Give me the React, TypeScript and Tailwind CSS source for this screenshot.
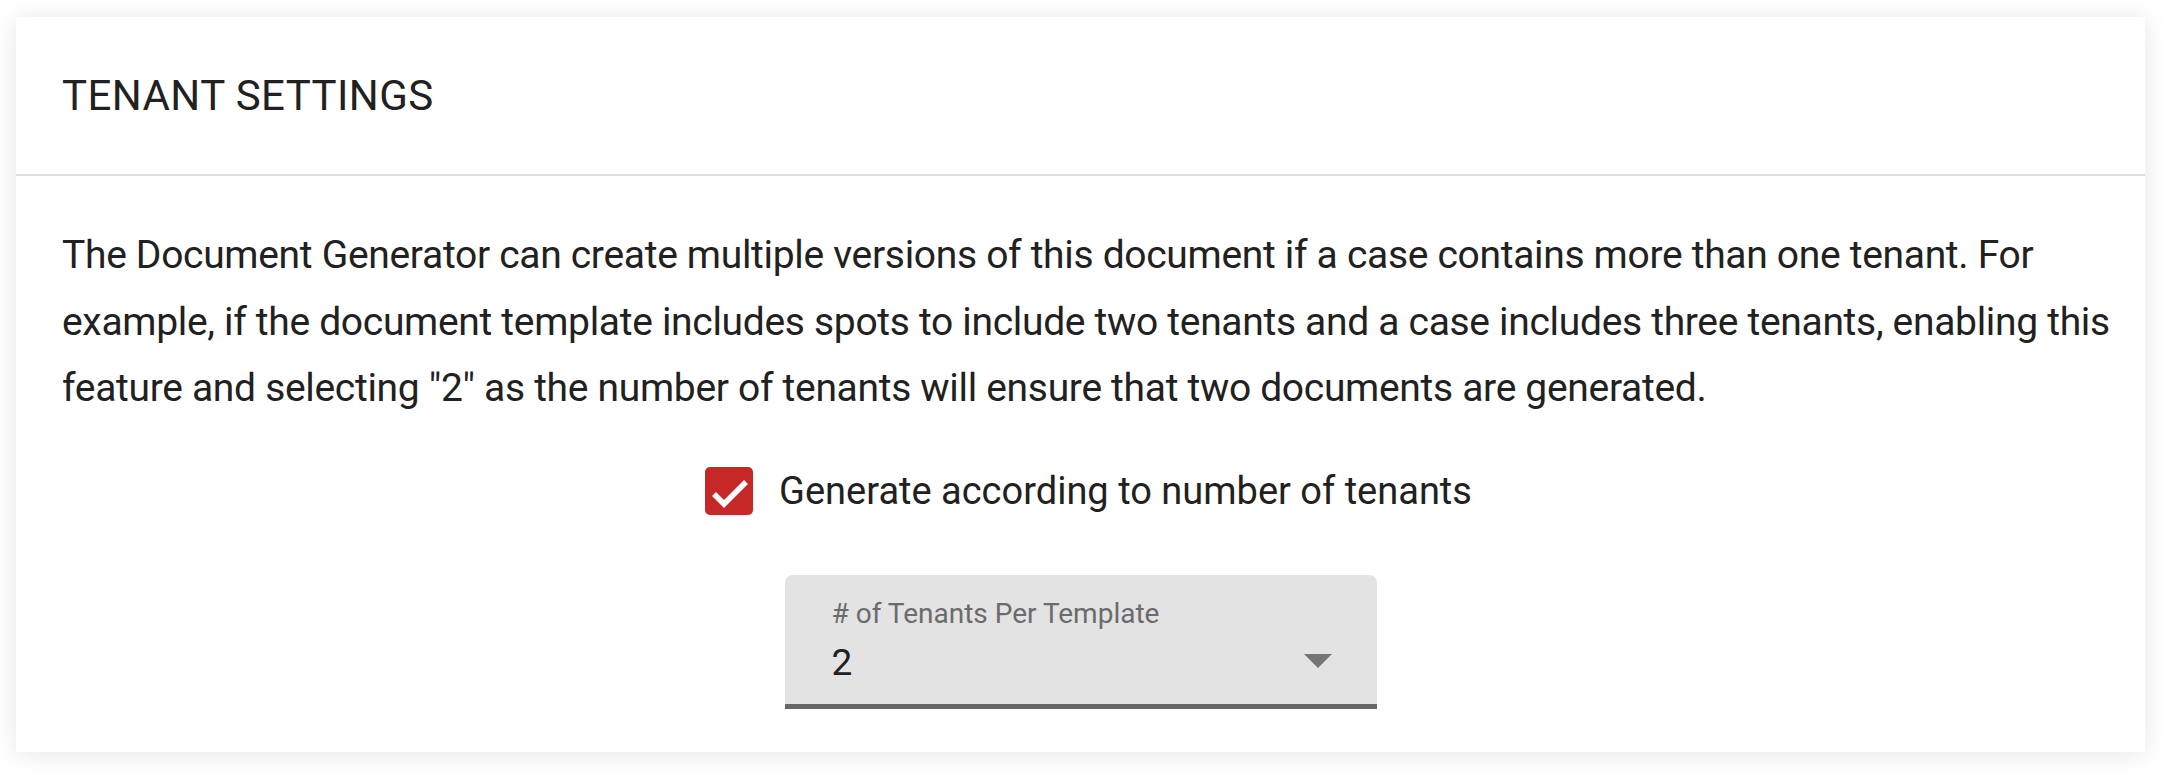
const font = { fontFamily: "Roboto, 'Noto Sans', sans-serif" };

const CheckBox = () => {
    return (
        <div className="flex h-[48px] w-[48px] shrink-0 items-center justify-center rounded-[5px] bg-[#c62828]">
            <svg width="48" height="48" viewBox="0 0 48 48">
                <polyline
                    points="9,27 19,37 41,15"
                    fill="none"
                    stroke="#ffffff"
                    strokeWidth="5.5"
                />
            </svg>
        </div>
    );
};

const TenantSelect = () => {
    return (
        <div className="w-[592px] rounded-t-[8px] border-b-[5px] border-[#666666] bg-[#e3e3e3] pt-[23px] pr-[45px] pb-[21px] pl-[47px]">
            <div className="text-[28px] leading-[32px] text-[#6b6b6b]">
                # of Tenants Per Template
            </div>
            <div className="mt-[13px] flex items-center justify-between">
                <div className="text-[37px] leading-[40px] text-[#212121]">2</div>
                <svg width="28" height="14" viewBox="0 0 28 14" className="mb-[5px]">
                    <polygon points="0,0 28,0 14,14" fill="#757575" />
                </svg>
            </div>
        </div>
    );
};

export default function App() {
    return (
        <div
            className="min-h-[774px] bg-white pt-[17px] pr-[21px] pb-[21px] pl-[16px]"
            style={font}
        >
            <div className="bg-white shadow-[0_2px_24px_rgba(0,0,0,0.1)]">
                <div className="flex h-[157px] items-center pl-[46px]">
                    <h1 className="text-[42px] font-normal tracking-[0.01em] text-[#212121]">
                        TENANT SETTINGS
                    </h1>
                </div>
                <div className="h-[2px] bg-[#dedede]" />

                <div className="pt-[46px] pb-[43px]">
                    <p className="pr-[22px] pl-[46px] text-[39px] leading-[66.7px] tracking-[-0.008em] text-[#212121]">
                        The Document Generator can create multiple versions of this document if a
                        case contains more than one tenant. For example, if the document template
                        includes spots to include two tenants and a case includes three tenants,
                        enabling this feature and selecting "2" as the number of tenants will
                        ensure that two documents are generated.
                    </p>

                    <div className="mt-[45px] flex items-center justify-center gap-[26px] pl-[16px]">
                        <CheckBox />
                        <span className="text-[38px] leading-[48px] text-[#212121]">
                            Generate according to number of tenants
                        </span>
                    </div>

                    <div className="mt-[60px] flex justify-center">
                        <TenantSelect />
                    </div>
                </div>
            </div>
        </div>
    );
}
